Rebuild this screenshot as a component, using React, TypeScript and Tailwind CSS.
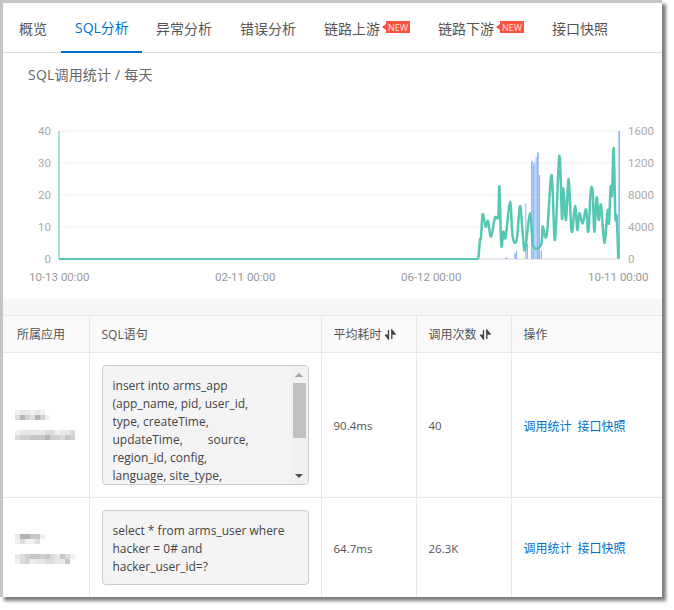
const font = { fontFamily: '"Open Sans","Noto Sans CJK SC",sans-serif' };

const tabs = [
  { name: '概览', w: 'w-[56px]' },
  { name: 'SQL分析', w: 'w-[81px]', active: true },
  { name: '异常分析', w: 'w-[84px]' },
  { name: '错误分析', w: 'w-[84px]' },
  { name: '链路上游', w: 'w-[114px]', isNew: true },
  { name: '链路下游', w: 'w-[114px]', isNew: true },
  { name: '接口快照', w: 'w-[84px]' },
];

// points read off the chart crop, 3x scale starting at (460,120)
const green = [
  [55, 416], [60, 360], [63, 352], [68, 283], [77, 320], [84, 303], [93, 350], [105, 293], [115, 290], [118, 200],
  [124, 375], [130, 335], [137, 352], [150, 245], [158, 350], [170, 360], [180, 258], [188, 340], [195, 390],
  [210, 280], [220, 378], [243, 375], [248, 320], [255, 350], [262, 330], [275, 165], [285, 360], [298, 108],
  [306, 295], [310, 205], [318, 300], [326, 178], [335, 335], [345, 258], [352, 330], [358, 280], [368, 310],
  [378, 268], [385, 335], [392, 215], [398, 215], [403, 335], [410, 232], [416, 300], [423, 255], [433, 368],
  [443, 270], [447, 310], [452, 200], [456, 225], [461, 85], [466, 290], [470, 290], [475, 416],
];
const bars = [
  [135, 413, 8], [163, 400, 5], [168, 393, 3], [196, 250, 3], [200, 370, 4], [213, 123, 5], [219, 130, 3],
  [223, 127, 3], [227, 112, 3], [231, 97, 5], [236, 165, 4], [242, 392, 4], [475, 33, 5],
];
const px = (x: number) => 460 + x / 3;
const py = (y: number) => 120 + y / 3;

function smooth(pts: number[][]) {
  let d = `M${pts[0][0]} ${pts[0][1]}`;
  for (let i = 0; i < pts.length - 1; i++) {
    const p0 = pts[i - 1] || pts[i];
    const p1 = pts[i];
    const p2 = pts[i + 1];
    const p3 = pts[i + 2] || p2;
    const c1 = [p1[0] + (p2[0] - p0[0]) / 6, p1[1] + (p2[1] - p0[1]) / 6];
    const c2 = [p2[0] - (p3[0] - p1[0]) / 6, p2[1] - (p3[1] - p1[1]) / 6];
    d += `C${c1[0]} ${c1[1]} ${c2[0]} ${c2[1]} ${p2[0]} ${p2[1]}`;
  }
  return d;
}

function Chart() {
  const curve = smooth(green.map(([x, y]) => [px(x), py(y)]));
  const left = [['40', 131], ['30', 163], ['20', 195], ['10', 227], ['0', 259]] as const;
  const right = [['1600', 131], ['1200', 163], ['8000', 195], ['4000', 227], ['0', 259]] as const;
  return (
    <svg viewBox="3 120 659 60" className="block w-[659px] h-[60px] overflow-visible">
      {[131, 163, 195, 227].map((y) => (
        <line key={y} x1="59" x2="619" y1={y} y2={y} stroke="#f6f6f6" strokeWidth="1.5" />
      ))}
      <line x1="59" x2="619" y1="259" y2="259" stroke="#e3e1ea" strokeWidth="1.5" />
      {bars.map(([x, y, w]) => (
        <rect key={x} x={px(x)} y={py(y)} width={w / 3} height={259 - py(y)} fill="#8ab8fb" />
      ))}
      <line x1="59" x2="59" y1="131" y2="259" stroke="#a6e3d7" strokeWidth="2" />
      <line x1="59" x2={px(55)} y1="259" y2="259" stroke="#55c8b4" strokeWidth="2" />
      <path d={curve} fill="none" stroke="#55c8b4" strokeWidth="2.5" strokeLinejoin="round" />
      <g fill="#aaaaaa" fontSize="11.5" fontFamily="Roboto, sans-serif">
        {left.map(([t, y]) => (
          <text key={t} x="51" y={y + 4} textAnchor="end">{t}</text>
        ))}
        {right.map(([t, y]) => (
          <text key={t} x="628" y={y + 4}>{t}</text>
        ))}
      </g>
      <g fill="#999999" fontSize="11.5" fontFamily="Roboto, sans-serif">
        <text x="29" y="281">10-13 00:00</text>
        <text x="215" y="281">02-11 00:00</text>
        <text x="401" y="281">06-12 00:00</text>
        <text x="588" y="281">10-11 00:00</text>
      </g>
    </svg>
  );
}

function NewBadge() {
  return (
    <span className="ml-[6px] relative -top-[1px] flex h-[12px] w-[24px] items-center justify-center bg-[#fb5340] text-[9px] leading-none text-[#fde0dc] before:absolute before:left-[-4px] before:top-[3px] before:border-y-[3px] before:border-r-[4px] before:border-y-transparent before:border-r-[#fb5340]">
      NEW
    </span>
  );
}

function SortIcon() {
  return (
    <svg width="11" height="11" viewBox="0 0 11 11" className="ml-[3px] inline-block align-[-1px]">
      <path d="M3.5 1v9L0.5 6.2h3" stroke="#444" strokeWidth="1.3" fill="#444" />
      <path d="M6.8 10V1l3.2 4h-3.2" stroke="#444" strokeWidth="1.3" fill="#444" />
    </svg>
  );
}

const shade: Record<string, string> = {
  '0': 'bg-white',
  f: 'bg-[#f0f0f0]',
  e: 'bg-[#e8e8e8]',
  d: 'bg-[#dcdcdc]',
  c: 'bg-[#d0d0d0]',
  b: 'bg-[#c6c6c6]',
  a: 'bg-[#b4b4b4]',
};

function Mosaic({ rows }: { rows: string[] }) {
  return (
    <div>
      {rows.map((row, i) => (
        <div key={i} className="flex">
          {row.split('').map((s, j) => (
            <div key={j} className={`h-[5px] w-[5px] ${shade[s]}`} />
          ))}
        </div>
      ))}
    </div>
  );
}

function AppName({ top, bottom, className }: { top: string[]; bottom: string[]; className?: string }) {
  return (
    <div className={`flex flex-col gap-[10px] pl-[12px] ${className || ''}`}>
      <Mosaic rows={top} />
      <Mosaic rows={bottom} />
    </div>
  );
}

function Scrollbar() {
  return (
    <div className="flex w-[17px] shrink-0 flex-col items-center bg-[#f1f1f1]">
      <div className="flex h-[17px] items-center">
        <div className="border-x-[4px] border-b-[4px] border-x-transparent border-b-[#a3a3a3]" />
      </div>
      <div className="h-[55px] w-[13px] bg-[#c1c1c1]" />
      <div className="flex-1" />
      <div className="flex h-[17px] items-center">
        <div className="border-x-[4px] border-t-[4px] border-x-transparent border-t-[#505050]" />
      </div>
    </div>
  );
}

function Links() {
  return (
    <div className="flex gap-[6px] pt-[4px] text-[#0070cc]">
      <a>调用统计</a>
      <a>接口快照</a>
    </div>
  );
}

const th = 'border-r border-[#e8e8e8] pl-[12px] pt-[2px] text-left font-normal';
const td = 'border-r border-[#e8e8e8] pl-[12px] align-middle';
const num = 'border-r border-[#e8e8e8] pl-[12px] pt-[2px] align-middle text-[11.5px]';

export default function App() {
  return (
    <div className="h-[610px] w-[674px] bg-white" style={font}>
      <div className="h-[597px] w-[662px] overflow-hidden border-l-[3px] border-t-[3px] border-[#c6c6c6] bg-white">
        <div className="flex h-[50px] border-b border-[#dddddd] pl-[2px]">
          {tabs.map((t) => (
            <div
              key={t.name}
              className={`flex h-[50px] items-center pl-[14px] text-[14px] ${t.w} ${t.active ? 'border-b-2 border-[#006ecc] text-[#0070cc]' : 'text-[#555555]'}`}
            >
              {t.name}
              {t.isNew && <NewBadge />}
            </div>
          ))}
        </div>

        <div className="h-[246px] shadow-[0_1px_2px_rgba(0,0,0,0.12)]">
          <div className="pl-[25px] pt-[12px] text-[14px] leading-[20px] tracking-[0.2px] text-[#666666]">SQL调用统计 / 每天</div>
          <div className="pt-[35px]">
            <Chart />
          </div>
        </div>

        <div className="h-[16px] bg-[#f7f7f7]" />

        <table className="w-[659px] table-fixed border-collapse text-[12px] text-[#555555]">
          <colgroup>
            <col className="w-[86px]" />
            <col className="w-[232px]" />
            <col className="w-[95px]" />
            <col className="w-[95px]" />
            <col />
          </colgroup>
          <thead>
            <tr className="h-[37px] border-y border-[#e8e8e8] bg-[#fafafa]">
              <th className={`${th} !pl-[14px]`}>所属应用</th>
              <th className={th}>SQL语句</th>
              <th className={th}>平均耗时<SortIcon /></th>
              <th className={th}>调用次数<SortIcon /></th>
              <th className="pl-[12px] pt-[2px] text-left font-normal">操作</th>
            </tr>
          </thead>
          <tbody>
            <tr className="h-[145px] border-b border-[#e8e8e8]">
              <td className={`${td} !pl-0`}>
                <AppName
                  top={['feefef0', 'dacdacf']}
                  bottom={['feeeeeddfeed', 'dccbbbaccdbc']}
                />
              </td>
              <td className={td}>
                <div className="flex h-[120px] w-[207px] overflow-hidden rounded-[4px] border border-[#cccccc] bg-[#f4f4f4]">
                  <div className="flex-1 pl-[10px] pt-[11px] text-[12px] leading-[18px] text-[#444444]">
                    insert into arms_app
                    <br />
                    (app_name, pid, user_id,
                    <br />
                    type, createTime,
                    <br />
                    <span className="whitespace-pre">updateTime,        source,</span>
                    <br />
                    region_id, config,
                    <br />
                    language, site_type,
                  </div>
                  <Scrollbar />
                </div>
              </td>
              <td className={num}>90.4ms</td>
              <td className={num}>40</td>
              <td className="pl-[12px]"><Links /></td>
            </tr>
            <tr className="h-[99px]">
              <td className={`${td} !pl-0`}>
                <AppName
                  className="pt-[4px]"
                  top={['eaabbf0', 'fdffd00']}
                  bottom={['edcbbcbdebdf', 'fdcfeeddeeb0']}
                />
              </td>
              <td className={td}>
                <div className="h-[75px] w-[207px] rounded-[4px] border border-[#cccccc] bg-[#f4f4f4] pl-[10px] pt-[11px] text-[12px] leading-[18px] text-[#444444]">
                  select * from arms_user where
                  <br />
                  hacker = 0# and
                  <br />
                  hacker_user_id=?
                </div>
              </td>
              <td className={num}>64.7ms</td>
              <td className={num}>26.3K</td>
              <td className="pl-[12px]"><Links /></td>
            </tr>
          </tbody>
        </table>
      </div>
      <div className="pointer-events-none absolute left-0 top-0 h-[597px] w-[662px] shadow-[4px_4px_3px_rgba(0,0,0,0.5)]" />
    </div>
  );
}
